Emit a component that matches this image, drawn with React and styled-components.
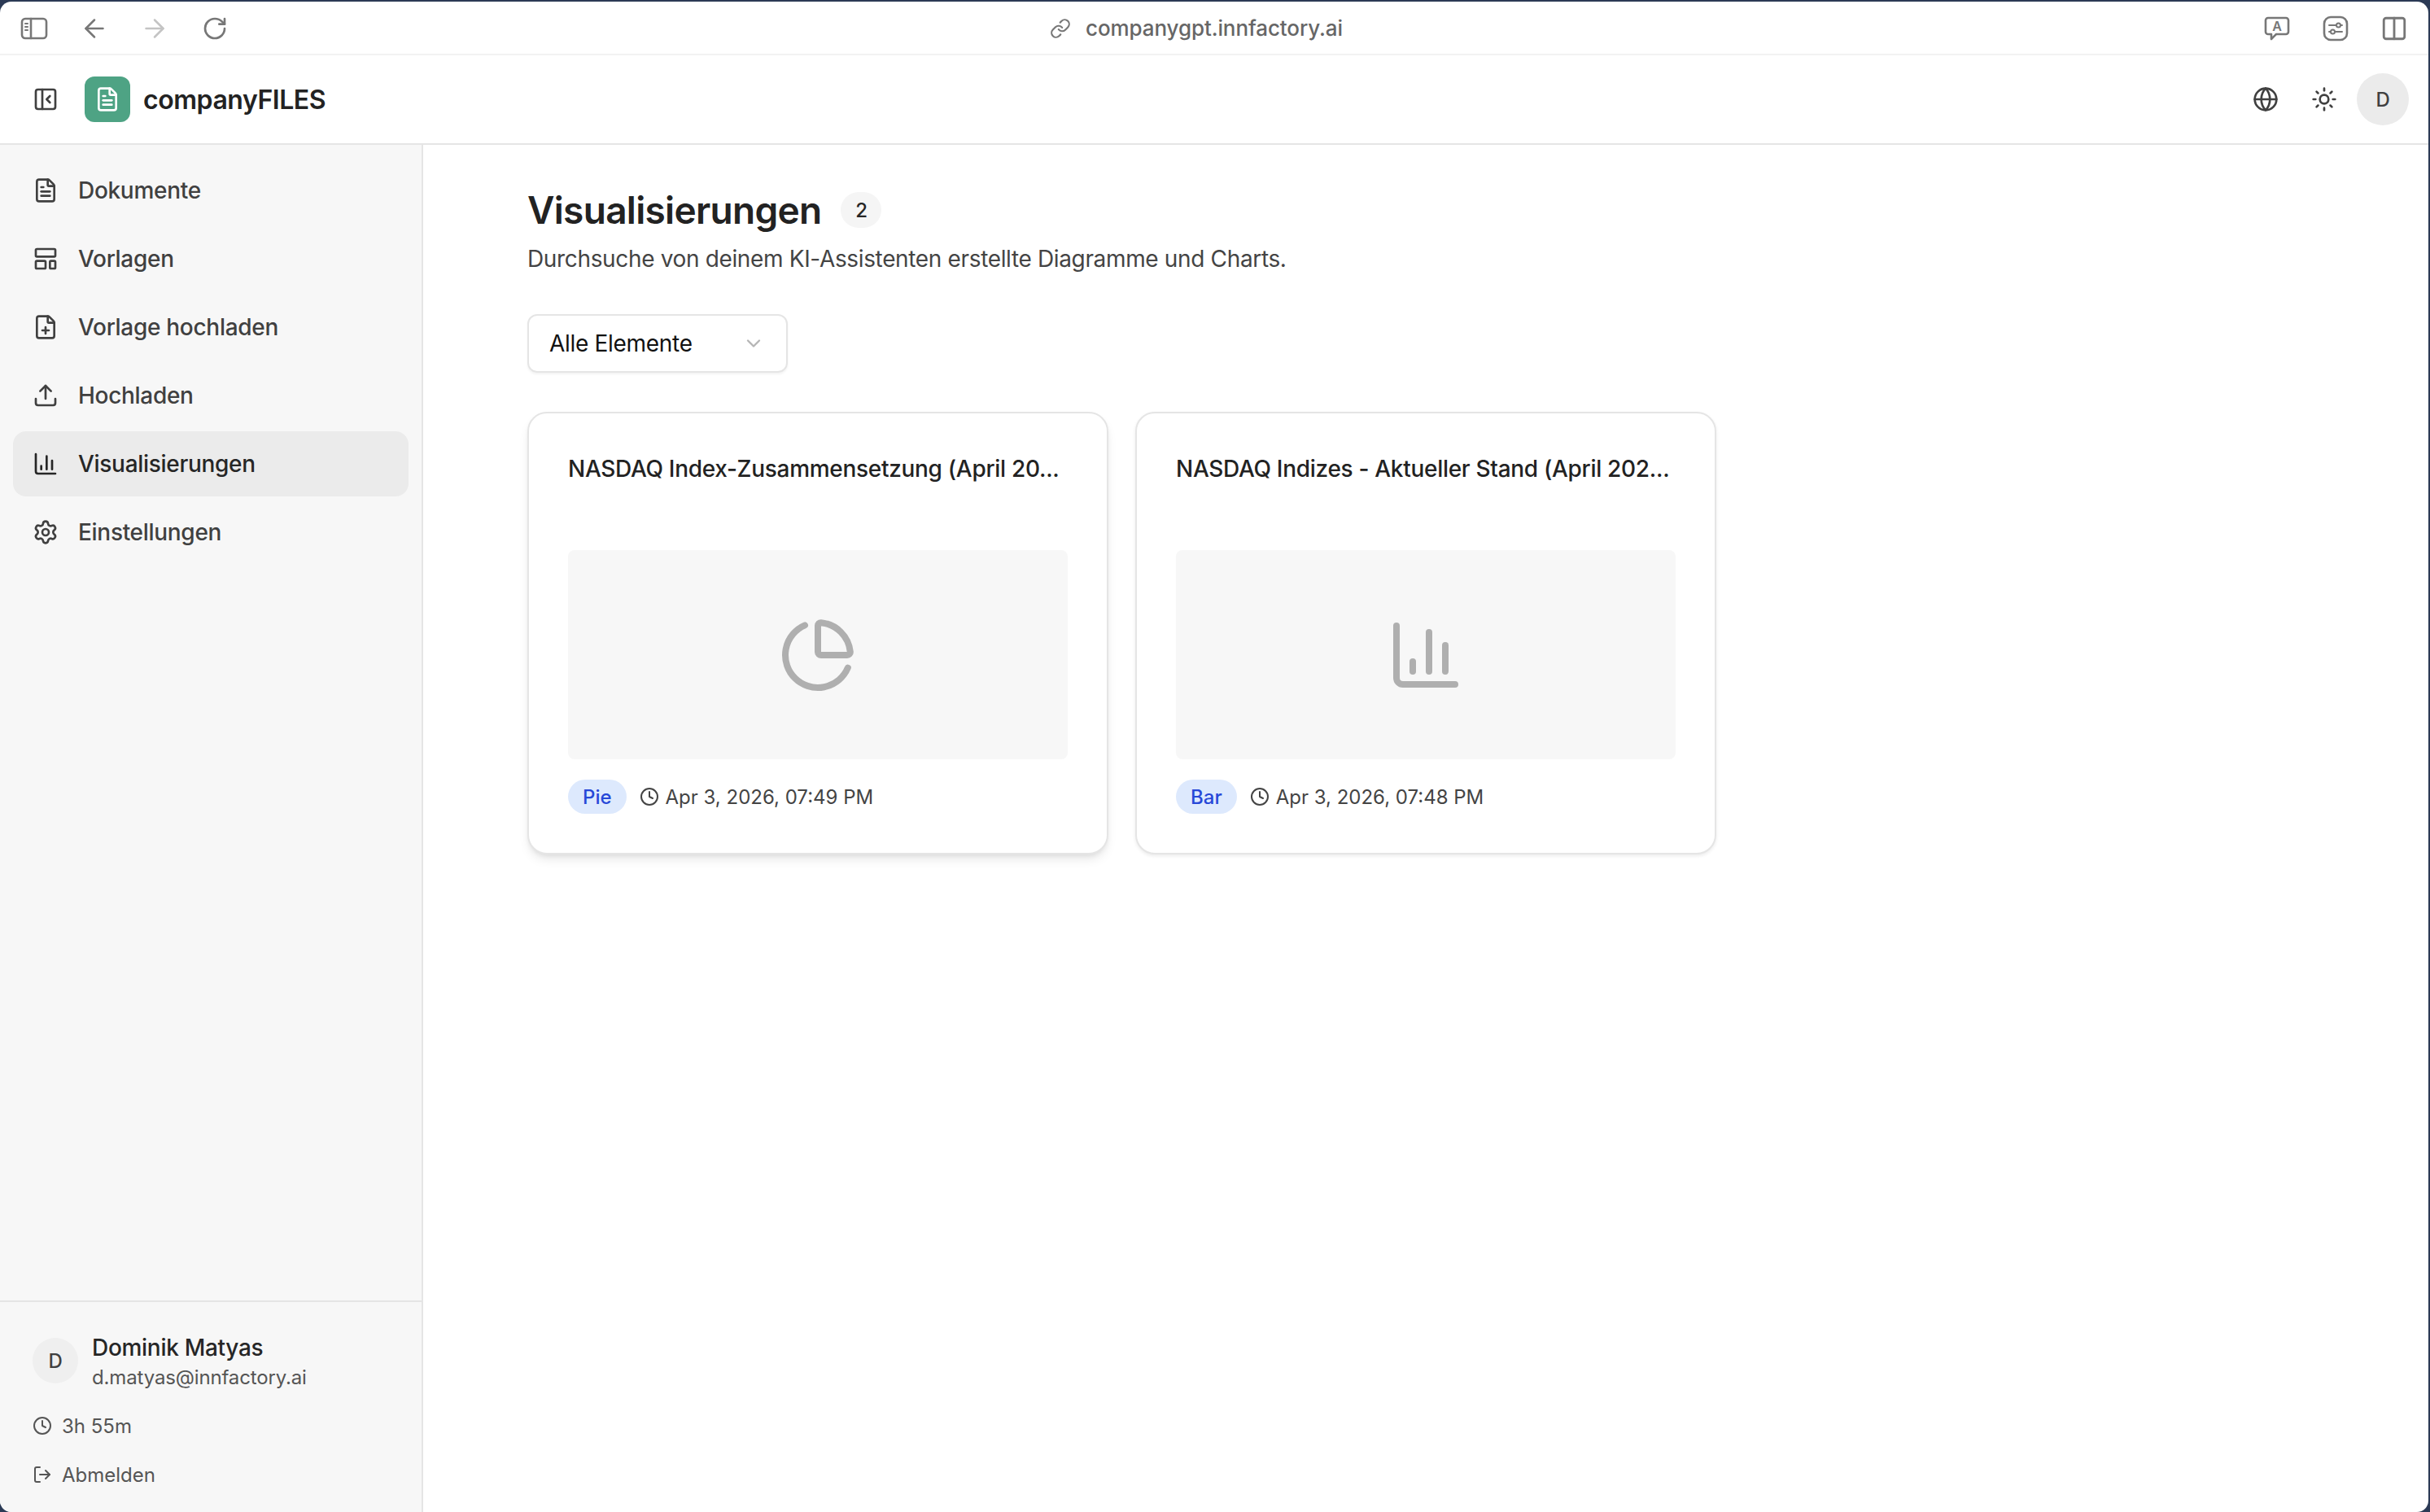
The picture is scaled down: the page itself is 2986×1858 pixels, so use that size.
import styled, { createGlobalStyle } from 'styled-components';
import {
  ArrowLeft,
  ArrowRight,
  ChartColumn,
  ChartPie,
  ChevronDown,
  Clock,
  Columns2,
  FilePlus,
  FileText,
  Globe,
  LayoutTemplate,
  Link,
  LogOut,
  PanelLeftClose,
  RotateCw,
  Settings,
  Sun,
  Upload,
} from 'lucide-react';

const GlobalStyle = createGlobalStyle`
  html, body {
    margin: 0;
    padding: 0;
    background: #2b3a55;
  }
  * {
    box-sizing: border-box;
  }
  body {
    font-family: Inter, "Liberation Sans", sans-serif;
    color: #1f1f1f;
    letter-spacing: -0.3px;
  }
`;

const Desktop = styled.div`
  width: 2986px;
  height: 1858px;
  padding: 2px 2px 0 0;
  background: #2b3a55;
  overflow: hidden;
`;

const Window = styled.div`
  height: 100%;
  display: flex;
  flex-direction: column;
  background: #fff;
  border-radius: 14px;
  overflow: hidden;
`;

const BrowserBar = styled.div`
  flex: 0 0 66px;
  display: grid;
  grid-template-columns: 1fr auto 1fr;
  align-items: center;
  padding: 1px 24px 0;
  border-bottom: 2px solid #f2f2f2;
`;

const BrowserGroup = styled.div`
  display: flex;
  align-items: center;
  gap: ${(p) => p.$gap}px;
  justify-content: ${(p) => (p.$end ? 'flex-end' : 'flex-start')};
`;

const BrowserButton = styled.span`
  width: 36px;
  height: 36px;
  display: flex;
  align-items: center;
  justify-content: center;
`;

const AddressBar = styled.div`
  display: flex;
  align-items: center;
  gap: 18px;
  margin-right: 44px;
  font-size: 26px;
  font-weight: 500;
  letter-spacing: -0.1px;
  color: #666;
`;

const AppHeader = styled.header`
  flex: 0 0 110px;
  display: flex;
  align-items: center;
  justify-content: space-between;
  padding: 0 24px 0 40px;
  border-bottom: 2px solid #e5e5e5;
`;

const HeaderGroup = styled.div`
  display: flex;
  align-items: center;
  gap: ${(p) => p.$gap || 0}px;
`;

const LogoBox = styled.div`
  width: 56px;
  height: 56px;
  margin-left: 32px;
  border-radius: 12px;
  background: #4ea384;
  color: #fff;
  display: flex;
  align-items: center;
  justify-content: center;
`;

const Brand = styled.span`
  margin-left: 16px;
  font-size: 32px;
  font-weight: 600;
  letter-spacing: -0.45px;
  color: #222;
`;

const IconSlot = styled.span`
  display: inline-flex;
  color: #404040;
  margin-right: ${(p) => p.$right || 0}px;
`;

const Avatar = styled.div`
  width: ${(p) => p.$size}px;
  height: ${(p) => p.$size}px;
  flex: none;
  border-radius: 50%;
  background: ${(p) => p.$bg};
  color: #404040;
  font-size: 24px;
  font-weight: 500;
  display: flex;
  align-items: center;
  justify-content: center;
`;

const UserAvatar = styled(Avatar)`
  margin-top: 6px;
`;

const Body = styled.div`
  flex: 1;
  min-height: 0;
  display: flex;
`;

const Sidebar = styled.aside`
  flex: 0 0 520px;
  display: flex;
  flex-direction: column;
  background: #f7f7f7;
  border-right: 2px solid #e5e5e5;
`;

const Nav = styled.nav`
  flex: 1;
  display: flex;
  flex-direction: column;
  gap: 4px;
  padding: 16px 16px 0;
`;

const NavItem = styled.a`
  height: 80px;
  display: flex;
  align-items: center;
  gap: 24px;
  padding: 0 24px;
  border-radius: 16px;
  font-size: 28px;
  font-weight: 500;
  color: ${(p) => (p.$active ? '#262626' : '#404040')};
  background: ${(p) => (p.$active ? '#ebebeb' : 'transparent')};
`;

const UserPanel = styled.div`
  flex: 0 0 260px;
  padding: 38px 40px 0;
  border-top: 2px solid #e5e5e5;
`;

const UserRow = styled.div`
  display: flex;
  align-items: flex-start;
  gap: 17px;
  margin-bottom: 10px;
`;

const UserName = styled.div`
  font-size: 28px;
  font-weight: 500;
  line-height: 36px;
  color: #262626;
`;

const UserMail = styled.div`
  font-size: 24px;
  line-height: 38px;
  letter-spacing: -0.15px;
  color: #555;
`;

const UserMeta = styled.div`
  height: 60px;
  display: flex;
  align-items: center;
  gap: 12px;
  font-size: 24px;
  letter-spacing: 0;
  color: #555;
`;

const Main = styled.main`
  flex: 1;
  padding: 58px 128px 0;
`;

const TitleRow = styled.div`
  height: 44px;
  display: flex;
  align-items: center;
  gap: 24px;
`;

const PageTitle = styled.h1`
  margin: 0;
  font-size: 46px;
  font-weight: 600;
  letter-spacing: -0.7px;
  color: #222;
`;

const CountBadge = styled.span`
  width: 50px;
  height: 44px;
  border-radius: 22px;
  background: #f5f5f5;
  color: #262626;
  font-size: 24px;
  font-weight: 500;
  display: flex;
  align-items: center;
  justify-content: center;
`;

const Subtitle = styled.p`
  margin: 22px 0 0;
  font-size: 28px;
  line-height: 32px;
  letter-spacing: -0.35px;
  color: #444;
`;

const Select = styled.div`
  width: 320px;
  height: 72px;
  margin-top: 52px;
  padding: 0 26px 0 25px;
  display: flex;
  align-items: center;
  justify-content: space-between;
  border: 2px solid #e5e5e5;
  border-radius: 12px;
  box-shadow: 0 2px 3px rgba(0, 0, 0, 0.05);
  font-size: 28px;
  color: #111;
`;

const CardGrid = styled.div`
  display: grid;
  grid-template-columns: repeat(3, 714px);
  gap: 33px;
  margin-top: 48px;
`;

const Card = styled.article`
  padding: 48px;
  background: #fff;
  border: 2px solid #e5e5e5;
  border-radius: 24px;
  box-shadow: ${(p) =>
    p.$raised
      ? '0 8px 14px -3px rgba(0, 0, 0, 0.1), 0 3px 6px -2px rgba(0, 0, 0, 0.08)'
      : '0 2px 4px rgba(0, 0, 0, 0.08)'};
`;

const CardTitle = styled.h3`
  height: 76px;
  margin: 0 0 44px;
  padding-top: 1px;
  font-size: 28px;
  font-weight: 500;
  line-height: 38px;
  color: #222;
`;

const Thumb = styled.div`
  height: 257px;
  border-radius: 8px;
  background: #f7f7f7;
  color: #afafaf;
  display: flex;
  align-items: center;
  justify-content: center;
`;

const CardFooter = styled.div`
  display: flex;
  align-items: center;
  gap: 16px;
  margin-top: 25px;
  height: 42px;
  font-size: 24px;
  letter-spacing: 0;
  color: #444;
`;

const TypePill = styled.span`
  height: 42px;
  padding: 0 18px;
  border-radius: 21px;
  background: #dde9fd;
  color: #2748d8;
  font-size: 24px;
  font-weight: 500;
  display: flex;
  align-items: center;
`;

const DateLabel = styled.span`
  display: flex;
  align-items: center;
  gap: 8px;
`;

const barIcon = { fill: 'none', stroke: '#777', strokeWidth: 2.6, strokeLinecap: 'round', strokeLinejoin: 'round' };

const SidebarGlyph = () => (
  <svg width="34" height="28" viewBox="0 0 34 28" {...barIcon}>
    <rect x="2" y="2" width="30" height="24" rx="4" />
    <path d="M13 2v24" />
    <path d="M6 8h3M6 12h3M6 16h3" strokeWidth="2" />
  </svg>
);

const TranslateGlyph = () => (
  <svg width="32" height="30" viewBox="0 0 32 30" {...barIcon}>
    <path d="M5 2h22a3 3 0 0 1 3 3v14a3 3 0 0 1-3 3H15l-6 6v-6H5a3 3 0 0 1-3-3V5a3 3 0 0 1 3-3z" />
    <text x="16" y="18" textAnchor="middle" fontSize="16" fontWeight="600" fill="#777" stroke="none" fontFamily="Inter">
      A
    </text>
  </svg>
);

const TuneGlyph = () => (
  <svg width="32" height="32" viewBox="0 0 32 32" {...barIcon}>
    <rect x="2" y="2" width="28" height="28" rx="8" />
    <path d="M8 12h9M22 12h2M8 20h2M15 20h9" strokeWidth="2" />
    <circle cx="19.5" cy="12" r="2.5" strokeWidth="2" />
    <circle cx="12.5" cy="20" r="2.5" strokeWidth="2" />
  </svg>
);

const navItems = [
  { label: 'Dokumente', icon: FileText },
  { label: 'Vorlagen', icon: LayoutTemplate },
  { label: 'Vorlage hochladen', icon: FilePlus },
  { label: 'Hochladen', icon: Upload },
  { label: 'Visualisierungen', icon: ChartColumn, active: true },
  { label: 'Einstellungen', icon: Settings },
];

const charts = [
  {
    title: 'NASDAQ Index-Zusammensetzung (April 20...',
    type: 'Pie',
    date: 'Apr 3, 2026, 07:49 PM',
    icon: ChartPie,
    raised: true,
  },
  {
    title: 'NASDAQ Indizes - Aktueller Stand (April 202...',
    type: 'Bar',
    date: 'Apr 3, 2026, 07:48 PM',
    icon: ChartColumn,
  },
];

export default function App() {
  return (
    <>
      <GlobalStyle />
      <Desktop>
        <Window>
          <BrowserBar>
            <BrowserGroup $gap={38}>
              <BrowserButton>
                <SidebarGlyph />
              </BrowserButton>
              <BrowserButton>
                <ArrowLeft size={36} color="#777" strokeWidth={1.7} />
              </BrowserButton>
              <BrowserButton>
                <ArrowRight size={36} color="#c4c4c4" strokeWidth={1.7} />
              </BrowserButton>
              <BrowserButton>
                <RotateCw size={32} color="#777" />
              </BrowserButton>
            </BrowserGroup>
            <AddressBar>
              <Link size={26} color="#777" />
              companygpt.innfactory.ai
            </AddressBar>
            <BrowserGroup $gap={36} $end>
              <BrowserButton>
                <TranslateGlyph />
              </BrowserButton>
              <BrowserButton>
                <TuneGlyph />
              </BrowserButton>
              <BrowserButton>
                <Columns2 size={34} color="#777" />
              </BrowserButton>
            </BrowserGroup>
          </BrowserBar>

          <AppHeader>
            <HeaderGroup>
              <IconSlot>
                <PanelLeftClose size={32} />
              </IconSlot>
              <LogoBox>
                <FileText size={32} />
              </LogoBox>
              <Brand>companyFILES</Brand>
            </HeaderGroup>
            <HeaderGroup $gap={24}>
              <IconSlot $right={16}>
                <Globe size={32} />
              </IconSlot>
              <IconSlot>
                <Sun size={32} />
              </IconSlot>
              <Avatar $size={64} $bg="#ebebeb">D</Avatar>
            </HeaderGroup>
          </AppHeader>

          <Body>
            <Sidebar>
              <Nav>
                {navItems.map(({ label, icon: Icon, active }) => (
                  <NavItem key={label} $active={active}>
                    <Icon size={32} />
                    {label}
                  </NavItem>
                ))}
              </Nav>
              <UserPanel>
                <UserRow>
                  <UserAvatar $size={56} $bg="#efefef">D</UserAvatar>
                  <div>
                    <UserName>Dominik Matyas</UserName>
                    <UserMail>d.matyas@innfactory.ai</UserMail>
                  </div>
                </UserRow>
                <UserMeta>
                  <Clock size={24} />
                  3h 55m
                </UserMeta>
                <UserMeta>
                  <LogOut size={24} />
                  Abmelden
                </UserMeta>
              </UserPanel>
            </Sidebar>

            <Main>
              <TitleRow>
                <PageTitle>Visualisierungen</PageTitle>
                <CountBadge>2</CountBadge>
              </TitleRow>
              <Subtitle>Durchsuche von deinem KI-Assistenten erstellte Diagramme und Charts.</Subtitle>
              <Select>
                Alle Elemente
                <ChevronDown size={28} color="#b5b5b5" />
              </Select>
              <CardGrid>
                {charts.map(({ title, type, date, icon: Icon, raised }) => (
                  <Card key={title} $raised={raised}>
                    <CardTitle>{title}</CardTitle>
                    <Thumb>
                      <Icon size={96} />
                    </Thumb>
                    <CardFooter>
                      <TypePill>{type}</TypePill>
                      <DateLabel>
                        <Clock size={24} />
                        {date}
                      </DateLabel>
                    </CardFooter>
                  </Card>
                ))}
              </CardGrid>
            </Main>
          </Body>
        </Window>
      </Desktop>
    </>
  );
}
